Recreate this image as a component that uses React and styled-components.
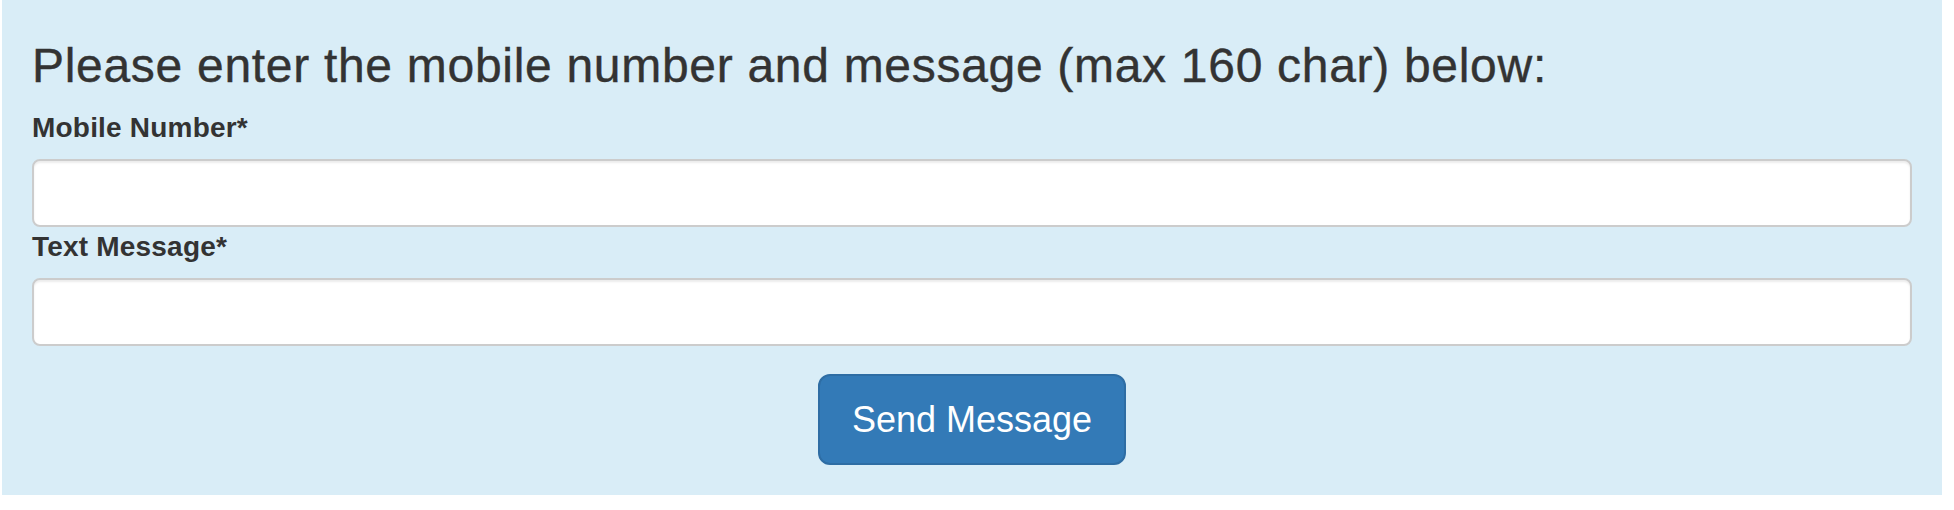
import React, { useState } from "react";
import styled, { createGlobalStyle } from "styled-components";

const GlobalStyle = createGlobalStyle`
  html, body {
    margin: 0;
    padding: 0;
    background: #ffffff;
  }
  body {
    font-family: "Liberation Sans", Arial, Helvetica, sans-serif;
    color: #333333;
  }
  * {
    box-sizing: border-box;
  }
`;

const Panel = styled.form`
  width: 1940px;
  margin-left: 2px;
  padding: 40px 30px 30px;
  background: #d9edf7;
  display: flex;
  flex-direction: column;
`;

const Heading = styled.h3`
  margin: 0 0 15px;
  font-size: 48px;
  font-weight: 500;
  line-height: 52.8px;
  letter-spacing: 0.7px;
  color: #333333;
  -webkit-text-stroke: 0.4px #333333;
`;

const Field = styled.div`
  display: flex;
  flex-direction: column;
`;

const Label = styled.label`
  font-size: 28px;
  font-weight: 700;
  line-height: 40px;
  letter-spacing: 0.2px;
  margin-bottom: 11px;
  color: #333333;
`;

const Input = styled.input`
  width: 100%;
  height: 68px;
  padding: 12px 24px;
  font-family: inherit;
  font-size: 28px;
  color: #555555;
  background: #ffffff;
  border: 2px solid #cccccc;
  border-radius: 8px;
  box-shadow: inset 0 2px 2px rgba(0, 0, 0, 0.075);
  outline: none;

  &:focus {
    border-color: #66afe9;
  }
`;

const Actions = styled.div`
  display: flex;
  justify-content: center;
  margin-top: 28px;
`;

const SubmitButton = styled.button`
  padding: 20px 32px;
  font-family: inherit;
  font-size: 36px;
  line-height: 47px;
  color: #ffffff;
  background: #337ab7;
  border: 2px solid #2e6da4;
  border-radius: 12px;
  cursor: pointer;

  &:hover {
    background: #286090;
  }
`;

export default function App() {
  const [mobile, setMobile] = useState("");
  const [message, setMessage] = useState("");

  const handleSubmit = (e) => {
    e.preventDefault();
  };

  return (
    <>
      <GlobalStyle />
      <Panel onSubmit={handleSubmit}>
        <Heading>Please enter the mobile number and message (max 160 char) below:</Heading>
        <Field>
          <Label htmlFor="mobile">Mobile Number*</Label>
          <Input id="mobile" value={mobile} onChange={(e) => setMobile(e.target.value)} />
        </Field>
        <Field>
          <Label htmlFor="message">Text Message*</Label>
          <Input
            id="message"
            maxLength={160}
            value={message}
            onChange={(e) => setMessage(e.target.value)}
          />
        </Field>
        <Actions>
          <SubmitButton type="submit">Send Message</SubmitButton>
        </Actions>
      </Panel>
    </>
  );
}
